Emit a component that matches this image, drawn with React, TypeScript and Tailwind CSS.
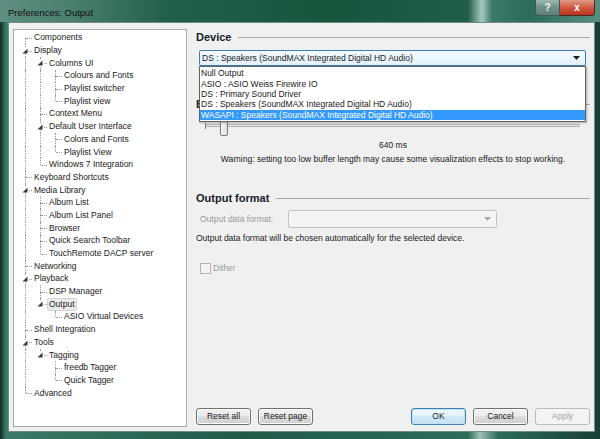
import { ReactElement } from "react";

type Node = [number, string, boolean];

const tree: Node[] = [
      [0, "Components", false],
      [0, "Display", true],
      [1, "Columns UI", true],
      [2, "Colours and Fonts", false],
      [2, "Playlist switcher", false],
      [2, "Playlist view", false],
      [1, "Context Menu", false],
      [1, "Default User Interface", true],
      [2, "Colors and Fonts", false],
      [2, "Playlist View", false],
      [1, "Windows 7 Integration", false],
      [0, "Keyboard Shortcuts", false],
      [0, "Media Library", true],
      [1, "Album List", false],
      [1, "Album List Panel", false],
      [1, "Browser", false],
      [1, "Quick Search Toolbar", false],
      [1, "TouchRemote DACP server", false],
      [0, "Networking", false],
      [0, "Playback", true],
      [1, "DSP Manager", false],
      [1, "Output", true],
      [2, "ASIO Virtual Devices", false],
      [0, "Shell Integration", false],
      [0, "Tools", true],
      [1, "Tagging", true],
      [2, "freedb Tagger", false],
      [2, "Quick Tagger", false],
      [0, "Advanced", false],
];

// does row i have a later sibling at its own level
const hasNext = (i: number): boolean => {
      const level = tree[i][0];
      for (let j = i + 1; j < tree.length; j++) {
            if (tree[j][0] < level) return false;
            if (tree[j][0] === level) return true;
      }
      return false;
};

const rows = tree.map(([level, label, expanded], i) => {
      const cont: boolean[] = [];
      for (let k = 0; k < level; k++) {
            let a = i - 1;
            while (a >= 0 && tree[a][0] !== k) a--;
            cont.push(a >= 0 && hasNext(a));
      }
      return { level, label, expanded, cont, next: hasNext(i), first: i === 0 };
});

const dots = "border-dotted border-[#9a9a9a]";

const TreeRow = ({ row }: { row: (typeof rows)[number] }): ReactElement => {
      const selected = row.label === "Output";
      return (
            <div className="flex h-[12.7px] items-center">
                  {row.cont.map((c, k) => (
                        <div key={k} className="relative w-[15px] h-full shrink-0">
                              {c && <div className={`absolute left-[7px] top-0 bottom-0 border-l ${dots}`} />}
                        </div>
                  ))}
                  <div className="relative w-[15px] h-full shrink-0">
                        {!row.first && <div className={`absolute left-[7px] top-0 h-1/2 border-l ${dots}`} />}
                        {row.next && <div className={`absolute left-[7px] top-1/2 bottom-0 border-l ${dots}`} />}
                        <div className={`absolute left-[8px] top-1/2 w-[6px] border-t ${dots}`} />
                        {row.expanded && (
                              <svg className="absolute left-[4px] top-[3.5px] bg-white" width="7" height="6" viewBox="0 0 7 6">
                                    <polygon points="5.5,0.5 5.5,5.5 0.5,5.5" fill="#3a3a3a" />
                              </svg>
                        )}
                  </div>
                  <span
                        className={
                              selected
                                    ? "ml-[-1px] px-[1px] leading-[11px] bg-[#ebebeb] border border-[#d4d4d4] rounded-[2px]"
                                    : "pl-[1px] leading-[11px]"
                        }
                  >
                        {row.label}
                  </span>
            </div>
      );
};

const Heading = ({ text, className }: { text: string; className: string }): ReactElement => (
      <div className={`flex items-center h-[12px] ${className}`}>
            <span className="text-[11px] font-bold text-[#15202b]">{text}</span>
            <div className="flex-1 ml-[7px] border-t border-[#a8a8a8]" />
      </div>
);

const Button = ({ label, kind }: { label: string; kind?: "default" | "disabled" }): ReactElement => {
      const base = "w-[55px] h-[17px] flex items-center justify-center rounded-[3px] border text-[8.5px]";
      if (kind === "disabled")
            return <div className={`${base} border-[#b8bcbf] bg-[#f4f4f4] text-[#a3a3a3]`}>{label}</div>;
      if (kind === "default")
            return (
                  <div className={`${base} border-[#3c7fb1] bg-[linear-gradient(#f3f9fc,#e5f2fa_45%,#d3e9f6_50%,#c4e2f3)] text-[#1a1a1a] shadow-[inset_0_0_0_1px_#c2e4f6]`}>
                        {label}
                  </div>
            );
      return (
            <div className={`${base} border-[#707070] bg-[linear-gradient(#f2f2f2,#ebebeb_45%,#dddddd_50%,#cfcfcf)] text-[#1a1a1a] shadow-[inset_0_0_0_1px_#fcfcfc]`}>
                  {label}
            </div>
      );
};

const devices = [
      "Null Output",
      "ASIO : ASIO Weiss Firewire IO",
      "DS : Primary Sound Driver",
      "DS : Speakers (SoundMAX Integrated Digital HD Audio)",
      "WASAPI : Speakers (SoundMAX Integrated Digital HD Audio)",
];

const App = (): ReactElement => {
      return (
            <div
                  className="w-[600px] h-[439px] flex flex-col overflow-hidden bg-[linear-gradient(90deg,#0f2b22,#3b7a66_1%,#1f5a47_40%,#2b6c58_78%,#9ec0ba_80%,#2d6b58_83%,#183f33)] text-[#1a1a1a]"
                  style={{ fontFamily: '"Liberation Sans", Arial, sans-serif' }}
            >
                  {/* title bar */}
                  <div className="h-[22px] flex items-start shrink-0 bg-[linear-gradient(90deg,#5f8f80_0%,#4a7e6d_12%,#225f4b_28%,#17553f_55%,#1f5d49_78%,#a8c9c3_80.3%,#3b7a67_82%,#2b6b58_88%,#5a8e80_100%)]">
                        <span className="ml-[8px] mt-[6px] text-[9.5px] text-[#111]">Preferences: Output</span>
                        <div className="ml-auto mr-[5px] flex">
                              <div className="w-[25px] h-[16px] flex items-center justify-center rounded-bl-[4px] border border-t-0 border-[#3f5a52] bg-[linear-gradient(#9fb8b1,#6e918a_50%,#5d8279)] text-[10px] font-bold text-[#f4f4f4]">
                                    ?
                              </div>
                              <div className="w-[35px] h-[16px] flex items-center justify-center rounded-br-[4px] border border-t-0 border-l-0 border-[#4b2a22] bg-[linear-gradient(#e49a87,#cf5a40_50%,#b8341c)] text-[10px] font-bold text-white">
                                    x
                              </div>
                        </div>
                  </div>

                  <div className="flex flex-1 min-h-0">
                        <div className="w-[8px] shrink-0" />
                        {/* client area */}
                        <div className="flex-1 flex bg-[#f0f0f0] border border-[#6f8f86] pl-[4px] pr-[4px] pt-[6px] pb-[4px]">
                              {/* tree */}
                              <div className="w-[174px] h-[398px] shrink-0 bg-white border border-[#a4a8ad] pl-[4px] pt-[1.5px] text-[8.5px]">
                                    {rows.map((r, i) => (
                                          <TreeRow key={i} row={r} />
                                    ))}
                              </div>

                              {/* settings */}
                              <div className="ml-[9px] flex-1 flex flex-col text-[8.5px]">
                                    <Heading text="Device" className="mt-[2px]" />

                                    <div className="relative mt-[7px] ml-[3px] w-[387px] h-[16px]">
                                          <div className="h-full flex items-center border border-[#3c7fb1] rounded-[2px] bg-[linear-gradient(#f4fafe,#e3f1fb)] pl-[2px] pr-[5px]">
                                                <span className="flex-1">DS : Speakers (SoundMAX Integrated Digital HD Audio)</span>
                                                <svg width="7" height="4" viewBox="0 0 7 4">
                                                      <polygon points="0,0 7,0 3.5,4" fill="#202020" />
                                                </svg>
                                          </div>
                                          <div className="absolute z-10 left-0 top-full w-full bg-white border border-[#646464] shadow-[1px_1px_2px_rgba(0,0,0,0.3)] py-[1px]">
                                                {devices.map((d) => (
                                                      <div
                                                            key={d}
                                                            className={`h-[10.4px] flex items-center pl-[1px] leading-[10px] ${d.startsWith("WASAPI") ? "bg-[#3399ff] text-white" : ""}`}
                                                      >
                                                            {d}
                                                      </div>
                                                ))}
                                          </div>
                                    </div>

                                    <Heading text="Buffer length" className="mt-[32px]" />

                                    {/* slider */}
                                    <div className="relative mt-[8px] h-[20px] ml-[9px] mr-[10px]">
                                          <div className="absolute left-0 right-0 top-[6px] h-[3px] border border-[#b0b0b0] bg-[#e7eaea] rounded-[1px]" />
                                          <div className="absolute left-0 top-[5px] h-[6px] border-l border-[#808080]" />
                                          <div className="absolute left-[15px] top-[2px] w-[8px] h-[16px] rounded-[2px] border border-[#7a7a7a] bg-[linear-gradient(90deg,#f6f6f6,#e0e0e0)]" />
                                    </div>

                                    <div className="mt-[2px] h-[10px] flex items-center justify-center">640 ms</div>
                                    <div className="mt-[4px] h-[10px] flex items-center justify-center">
                                          Warning: setting too low buffer length may cause some visualization effects to stop working.
                                    </div>

                                    <Heading text="Output format" className="mt-[28px]" />

                                    <div className="mt-[6px] h-[18px] flex items-center">
                                          <span className="ml-[4px] w-[88px] text-[#9a9a9a]">Output data format:</span>
                                          <div className="w-[209px] h-full flex items-center justify-end border border-[#c3c3c3] rounded-[2px] bg-[#f4f4f4] pr-[5px]">
                                                <svg width="7" height="4" viewBox="0 0 7 4">
                                                      <polygon points="0,0 7,0 3.5,4" fill="#a8a8a8" />
                                                </svg>
                                          </div>
                                    </div>

                                    <div className="mt-[5px] h-[10px] flex items-center">
                                          Output data format will be chosen automatically for the selected device.
                                    </div>

                                    <div className="mt-[19px] h-[12px] flex items-center ml-[4px]">
                                          <div className="w-[11px] h-[11px] border border-[#b4b4b4] bg-[#f4f4f4]" />
                                          <span className="ml-[2px] text-[#9a9a9a]">Dither</span>
                                    </div>

                                    <div className="flex-1" />

                                    <div className="mb-[2px] h-[17px] flex items-center">
                                          <Button label="Reset all" />
                                          <div className="ml-[7px]">
                                                <Button label="Reset page" />
                                          </div>
                                          <div className="ml-auto">
                                                <Button label="OK" kind="default" />
                                          </div>
                                          <div className="ml-[7px]">
                                                <Button label="Cancel" />
                                          </div>
                                          <div className="ml-[7px]">
                                                <Button label="Apply" kind="disabled" />
                                          </div>
                                    </div>
                              </div>
                        </div>
                        <div className="w-[5px] shrink-0" />
                  </div>
                  <div className="h-[7px] shrink-0" />
            </div>
      );
};

export default App;
